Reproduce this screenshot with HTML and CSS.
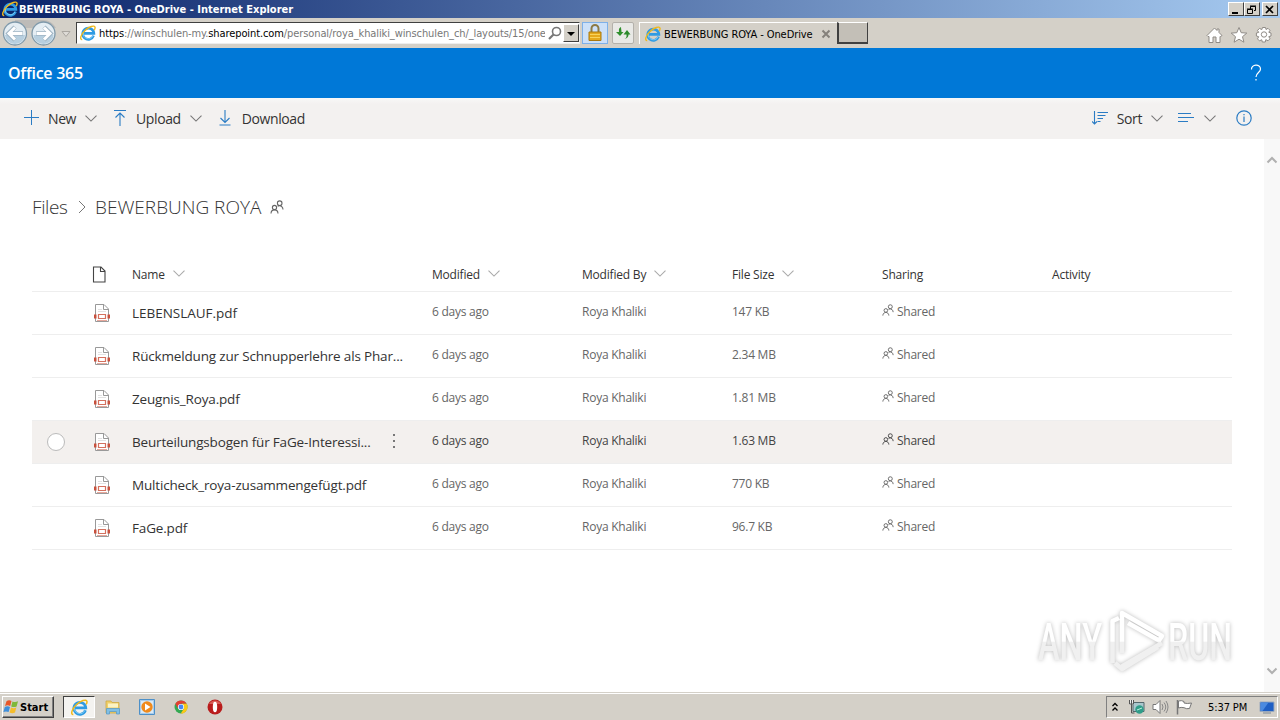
FILE: index.html
```html
<!DOCTYPE html>
<html lang="en">
<head>
    <meta charset="UTF-8">
    <title>BEWERBUNG ROYA - OneDrive</title>
    <link rel="stylesheet" href="styles.css">
</head>
<body>
    <!-- shared icons -->
    <svg class="defs" width="0" height="0">
        <symbol id="ie" viewBox="0 0 16 16">
            <path d="M13.6 10.6A5.6 5.6 0 1 1 13.9 8.4H4" fill="none" stroke="#2f9be3" stroke-width="2.6"/>
            <path d="M12.9 10.8A5 5 0 0 1 3.4 8" fill="none" stroke="#8ed4f7" stroke-width=".8"/>
            <path d="M2.2 14.6C-.6 14.8.6 9.600 5 5.400 9 1.600 14.400-.2 15 2.200c.2.9-.2 2-.8 2.900" fill="none" stroke="#f0b91c" stroke-width="1.4"/>
        </symbol>
        <symbol id="chev" viewBox="0 0 12 7">
            <path d="M.5.7 6 6.100 11.500.7" fill="none" stroke="currentColor" stroke-width="1.100"/>
        </symbol>
        <symbol id="people" viewBox="0 0 14 14">
            <g fill="none" stroke="currentColor" stroke-width="1.100">
                <circle cx="9.700" cy="3.200" r="2.300"/>
                <path d="M7.600 6.200Q9.700 4.800 11.800 6.600 13 7.800 13 9.500"/>
                <circle cx="4.500" cy="7.500" r="2.100"/>
                <path d="M1 13.500C1.200 8.600 7.800 8.600 8 13.500"/>
            </g>
        </symbol>
        <symbol id="pdf" viewBox="0 0 18 20">
            <path d="M2.500 18.500V1.500H11L15.500 6v12.500z" fill="#fff" stroke="#999"/>
            <path d="M10.500 1.500V6.500H15.500" fill="none" stroke="#999"/>
            <path d="M5 6.500h4M5 8.500h8" stroke="#e2e2e2"/>
            <path d="M1 11.500h2.500v4H1zM14.500 11.500h2.500v4h-2.500z" fill="#c8503c"/>
            <path d="M5.500 11.500h7v4h-7z" fill="#fff" stroke="#d4705e" stroke-width="1.200"/>
            <path d="M4 17.500h10" stroke="#e7a79b"/>
        </symbol>
    </svg>

    <div class="titlebar">
        <svg class="title-ie"><use href="#ie"/></svg>
        <span class="title-text">BEWERBUNG ROYA - OneDrive - Internet Explorer</span>
        <div class="win-buttons">
            <span class="win-btn"><svg width="12" height="10"><path d="M2 8h6" stroke="#000" stroke-width="2"/></svg></span>
            <span class="win-btn"><svg width="12" height="10"><path d="M4.500 4V1.500h5v4H8M4 1h6M1.500 4.500h5v4h-5zM1 4h6" fill="none" stroke="#000"/></svg></span>
            <span class="win-btn close"><svg width="12" height="10"><path d="M2 1l7 7M9 1 2 8" stroke="#000" stroke-width="1.700"/></svg></span>
        </div>
    </div>

    <div class="navbar">
        <svg class="nav-arrows" width="72" height="28" viewBox="0 0 72 28">
            <path d="M15 1h28c6 0 10 3 13 8H15z" fill="#bdbbb8"/>
            <g fill="#e4edf3" stroke="#7f99aa" stroke-width="1.300">
                <circle cx="15" cy="14.500" r="11.500"/>
                <circle cx="43.500" cy="14.500" r="11.500"/>
            </g>
            <path d="M5 16a10 9 0 0 0 20 0zM33.500 16a10 9 0 0 0 20 0z" fill="#b7cfdf"/>
            <g fill="none" stroke="#9fb4c3" stroke-width="4.400">
                <path d="M23 14.500H9M15 8l-6.500 6.500L15 21M36 14.500h14M44 8l6.500 6.500L44 21"/>
            </g>
            <g fill="none" stroke="#fff" stroke-width="3">
                <path d="M22.500 14.500H9M15 8.500l-6 6 6 6M36.500 14.500h14M44 8.500l6 6-6 6"/>
            </g>
            <path d="M62 12.500h8l-4 5z" fill="#dedbd6" stroke="#aaa6a0"/>
        </svg>
        <div class="address">
            <svg class="icon16"><use href="#ie"/></svg>
            <span class="url"><b>https</b>://winschulen-my.<b>sharepoint.com</b>/personal/roya_khaliki_winschulen_ch/_layouts/15/one</span>
            <svg width="14" height="14" class="search"><circle cx="8.500" cy="5.500" r="4" fill="none" stroke="#777" stroke-width="1.600"/><path d="M5.500 8.500 1 13" stroke="#777" stroke-width="2.200"/></svg>
            <span class="drop"><svg width="8" height="4"><path d="M0 0h8L4 4z"/></svg></span>
        </div>
        <span class="lock"><svg width="14" height="18"><path d="M3.500 8V4.500a3.500 3.500 0 0 1 7 0V8" fill="none" stroke="#8c7a45" stroke-width="2"/><path d="M1 8h12v8.500H1z" fill="#e5a91c" stroke="#a9780f"/><path d="M2 10.500h10M2 13.500h10" stroke="#f8d35c"/></svg></span>
        <span class="refresh"><svg width="16" height="14"><path d="M6 1C3.500 2 4 4 4 6H1L5 10l3.500-4H6.500C6.500 4 6 3 6 1z" fill="#2f8f2d"/><path d="M9.500 13c2.500-1 2-3 2-4.500H8.500L12 4l3.500 4.500H13.500c0 2-1 4-4 4.500z" fill="#2b8a2b"/></svg></span>
        <div class="tab">
            <svg class="icon16"><use href="#ie"/></svg>
            <span class="tab-text">BEWERBUNG ROYA - OneDrive</span>
            <svg width="10" height="10"><path d="M1.500 1.500l7 7m0-7-7 7" stroke="#85817b" stroke-width="2"/></svg>
        </div>
        <span class="new-tab"></span>
        <svg class="nav-tools" width="68" height="18" viewBox="0 0 68 18">
            <g fill="#fff" stroke="#8f8b86">
                <path d="M1 9.500 8.500 2l2.500 2.500V3h2v3.500l3 3-1.500 1H14V16.500h-4V11H7v5.500H3V10.500H2z"/>
                <path d="M33 1.500l2.200 5.200 5.600.4-4.300 3.600 1.400 5.500-4.900-3-4.900 3 1.400-5.500-4.300-3.600 5.600-.4z"/>
                <path d="M56.500 1.500h3l.5 2 2-1.200 2 2-1.200 2 2.200.7v3l-2.200.6 1.200 2.200-2 2-2.200-1.200-.5 2.400h-3l-.6-2.300-2.200 1.200-2-2 1.200-2.200-2.300-.7V7l2.300-.6-1.200-2 2-2 2.300 1.200z"/>
                <circle cx="58" cy="8.500" r="2.700"/>
            </g>
        </svg>
    </div>

    <div class="suite">
        <span class="brand">Office 365</span>
        <svg width="12" height="18"><path d="M1.500 5.500C1 .2 10.500-.6 10.500 5c0 3.500-4.500 3.500-4.500 8M6 15v1.500" fill="none" stroke="#fff" stroke-width="1.200"/></svg>
    </div>

    <div class="commands">
        <div class="cmd new">
            <svg width="16" height="16"><path d="M7.500 0v15M0 7.500h15" stroke="#2b7cc4"/></svg>
            <span>New</span>
            <svg class="chev"><use href="#chev"/></svg>
        </div>
        <div class="cmd upload">
            <svg width="12" height="16"><path d="M0 .5h12M6 16V3M1.500 7.500 6 3l4.500 4.500" fill="none" stroke="#2b7cc4" stroke-width="1.100"/></svg>
            <span>Upload</span>
            <svg class="chev"><use href="#chev"/></svg>
        </div>
        <div class="cmd download">
            <svg width="12" height="16"><path d="M.5 15h11M6 0v12M1.500 8 6 12.500 10.500 8" fill="none" stroke="#2b7cc4" stroke-width="1.100"/></svg>
            <span>Download</span>
        </div>
        <div class="cmd sort">
            <svg width="17" height="14"><path d="M2.500 0v13M0 10.500 2.500 13 5 10.500M5.500 1.500H16M5.500 4.500h8M5.500 7.500h5.500M5.500 10.500h3" fill="none" stroke="#2b7cc4" stroke-width="1.100"/></svg>
            <span>Sort</span>
            <svg class="chev"><use href="#chev"/></svg>
        </div>
        <div class="cmd view">
            <svg width="17" height="10"><path d="M0 .5h13M0 4.500h16M0 8.500h10" stroke="#2b7cc4"/></svg>
            <svg class="chev"><use href="#chev"/></svg>
        </div>
        <div class="cmd info">
            <svg width="16" height="16"><circle cx="8" cy="8" r="7.200" fill="none" stroke="#2b7cc4" stroke-width="1.200"/><path d="M8 6.500V12M8 4v1.300" stroke="#2b7cc4" stroke-width="1.200"/></svg>
        </div>
    </div>

    <div class="page">
        <div class="content">
            <div class="crumbs">
                <span class="crumb-files">Files</span>
                <svg width="8" height="14"><path d="M1 1l6 6-6 6" fill="none" stroke="#777"/></svg>
                <span class="crumb-current">BEWERBUNG ROYA</span>
                <svg class="crumb-people"><use href="#people"/></svg>
            </div>

            <div class="list">
                <div class="row head">
                    <span></span>
                    <span><svg width="14" height="17"><path d="M1.500 1h7.500l4 4v11H1.500zM8.500 1v4.500H13" fill="none" stroke="#444" stroke-width="1.100"/></svg></span>
                    <span>Name <svg class="chev"><use href="#chev"/></svg></span>
                    <span>Modified <svg class="chev"><use href="#chev"/></svg></span>
                    <span>Modified By <svg class="chev"><use href="#chev"/></svg></span>
                    <span>File Size <svg class="chev"><use href="#chev"/></svg></span>
                    <span>Sharing</span>
                    <span>Activity</span>
                </div>
                <div class="row">
                    <span></span>
                    <svg class="pdf"><use href="#pdf"/></svg>
                    <span class="name caps">LEBENSLAUF.pdf</span>
                    <span>6 days ago</span>
                    <span>Roya Khaliki</span>
                    <span>147 KB</span>
                    <span class="shared"><svg><use href="#people"/></svg>Shared</span>
                </div>
                <div class="row">
                    <span></span>
                    <svg class="pdf"><use href="#pdf"/></svg>
                    <span class="name">Rückmeldung zur Schnupperlehre als Phar...</span>
                    <span>6 days ago</span>
                    <span>Roya Khaliki</span>
                    <span>2.34 MB</span>
                    <span class="shared"><svg><use href="#people"/></svg>Shared</span>
                </div>
                <div class="row">
                    <span></span>
                    <svg class="pdf"><use href="#pdf"/></svg>
                    <span class="name">Zeugnis_Roya.pdf</span>
                    <span>6 days ago</span>
                    <span>Roya Khaliki</span>
                    <span>1.81 MB</span>
                    <span class="shared"><svg><use href="#people"/></svg>Shared</span>
                </div>
                <div class="row hover">
                    <span class="check"></span>
                    <svg class="pdf"><use href="#pdf"/></svg>
                    <span class="name">Beurteilungsbogen für FaGe-Interessi...<svg class="dots" width="4" height="16"><path d="M1 1h2v2H1zM1 7h2v2H1zM1 13h2v2H1z" fill="#777"/></svg></span>
                    <span>6 days ago</span>
                    <span>Roya Khaliki</span>
                    <span>1.63 MB</span>
                    <span class="shared"><svg><use href="#people"/></svg>Shared</span>
                </div>
                <div class="row">
                    <span></span>
                    <svg class="pdf"><use href="#pdf"/></svg>
                    <span class="name">Multicheck_roya-zusammengefügt.pdf</span>
                    <span>6 days ago</span>
                    <span>Roya Khaliki</span>
                    <span>770 KB</span>
                    <span class="shared"><svg><use href="#people"/></svg>Shared</span>
                </div>
                <div class="row">
                    <span></span>
                    <svg class="pdf"><use href="#pdf"/></svg>
                    <span class="name">FaGe.pdf</span>
                    <span>6 days ago</span>
                    <span>Roya Khaliki</span>
                    <span>96.7 KB</span>
                    <span class="shared"><svg><use href="#people"/></svg>Shared</span>
                </div>
            </div>
        </div>
        <div class="scrollbar">
            <svg width="12" height="8"><path d="M1.500 6.500 6 2l4.500 4.500" fill="none" stroke="#b0b0b0" stroke-width="2"/></svg>
            <svg width="12" height="8"><path d="M1.500 1.500 6 6l4.500-4.500" fill="none" stroke="#b0b0b0" stroke-width="2"/></svg>
        </div>

        <svg class="watermark" width="216" height="80" viewBox="0 0 216 80">
            <linearGradient id="fade" gradientUnits="userSpaceOnUse" x1="0" y1="0" x2="0" y2="76">
                <stop offset=".5" stop-color="#fff"/>
                <stop offset=".52" stop-color="#f0f0f0"/>
            </linearGradient>
            <text x="8" y="57" textLength="64" lengthAdjust="spacingAndGlyphs" fill="url(#fade)">ANY</text>
            <text x="138" y="57" textLength="64" lengthAdjust="spacingAndGlyphs" fill="url(#fade)">RUN</text>
            <path d="M89 15 82.500 18V60M92 50V10L132 33l-3 4.500L98 20M132 40 91 64M85 60l7 6 36-22" fill="none" stroke="url(#fade)" stroke-width="4.500" stroke-linejoin="round"/>
        </svg>
    </div>

    <div class="taskbar">
        <div class="start">
            <svg width="17" height="16" viewBox="0 0 17 16">
                <path d="M3.500 2.200Q6 .6 8.500 2L7.200 7Q4.700 5.600 2 7z" fill="#e8572a"/>
                <path d="M9.500 2.400Q12 3.800 15 2.300L13.600 7.400Q10.800 8.800 8.200 7.400z" fill="#7fb83a"/>
                <path d="M1.800 8Q4.500 6.700 7 8L5.600 13Q3 11.800.4 13z" fill="#3f8fdb"/>
                <path d="M8 8.400Q10.600 9.800 13.300 8.500L12 13.500Q9.200 14.800 6.600 13.400z" fill="#f5bd2c"/>
            </svg>
            <span>Start</span>
        </div>
        <div class="task active"><svg class="task-ie"><use href="#ie"/></svg></div>
        <div class="task">
            <svg width="16" height="16"><path d="M1 2h5l1 1.500h7V14H1z" fill="#efcf6a" stroke="#cfa943" stroke-width=".8"/><path d="M3 4.500h10v4H3z" fill="#fbf3c4"/><path d="M1.500 15V9.500h13V15h-3v-2.500h-7V15z" fill="#7fbfe6" stroke="#5b9cc8" stroke-width=".8"/></svg>
        </div>
        <div class="task">
            <svg width="16" height="16"><path d="M.5.5h15v15H.5z" fill="#a9cdec" stroke="#4d90c8"/><path d="M2 2h12v12H2z" fill="#d9eaf7"/><circle cx="8" cy="8" r="5.700" fill="#f08a1c"/><path d="M6 4.500v7L11.500 8z" fill="#fff"/></svg>
        </div>
        <div class="task">
            <svg width="14" height="14" viewBox="0 0 14 14"><circle cx="7" cy="7" r="6.500" fill="#33a852"/><path d="M1.300 3.800A6.500 6.500 0 0 1 12.700 3.800H7L4.200 8.700z" fill="#e23f32"/><path d="M12.700 3.800A6.500 6.500 0 0 1 6.700 13.500L10 8.500 8 3.800z" fill="#fbc816"/><circle cx="7" cy="7" r="3.100" fill="#fff"/><circle cx="7" cy="7" r="2.400" fill="#4587f3"/></svg>
        </div>
        <div class="task">
            <svg width="16" height="16"><circle cx="8" cy="8" r="7.500" fill="#b91c1c"/><path d="M2 5a7 7 0 0 1 12 0z" fill="#d85a55"/><ellipse cx="8" cy="8" rx="2.200" ry="5.300" fill="#fff"/></svg>
        </div>
        <div class="tray">
            <svg width="8" height="10"><path d="M1.500 4 4 1.500 6.500 4M1.500 8.500 4 6l2.500 2.500" fill="none" stroke="#000" stroke-width="1.300"/></svg>
            <svg class="net" width="17" height="16"><path d="M5 3.500h11v9H5z" fill="#a9c7cd" stroke="#54676c"/><path d="M1 1h4.500v4.500H1z" fill="#eee"/><path d="M1.500 1v4h4V1M3.500 1v13h3" fill="none" stroke="#555"/><circle cx="11.500" cy="10.500" r="4.200" fill="#2f9d89"/><path d="M9 11l5-2" stroke="#bff0df"/></svg>
            <svg class="vol" width="17" height="16"><path d="M1 5.500h3L8 1.500v13l-4-4H1z" fill="#fff" stroke="#777"/><path d="M10 5q2 3 0 6M12 3.500q3.500 4.500 0 9M14 2q4 6 0 12" fill="none" stroke="#888"/></svg>
            <svg class="flag" width="17" height="16"><path d="M1.500 1v14.500" stroke="#777" stroke-width="1.500"/><path d="M2.500 2q3-1 5.500.5v1.500q3 1 7.500 0l-2 5.500q-3 .8-5.500-.8-3-.8-5.500.3z" fill="#fff" stroke="#777"/></svg>
            <span class="clock">5:37 PM</span>
            <svg class="desk" width="16" height="13"><path d="M1 1h14v9.500H1z" fill="#1f5fc4" stroke="#9aa9bd"/><path d="M1.500 1.500h8l-6 8.500h-2z" fill="#4b8ae0"/><path d="M4 12h8" stroke="#7a8796"/></svg>
        </div>
    </div>
</body>
</html>
```
FILE: styles.css
```css
* {
    box-sizing: border-box;
}

body {
    margin: 0;
    width: 1280px;
    height: 720px;
    overflow: hidden;
    display: flex;
    flex-direction: column;
    background: #fff;
    color: #333;
    font-family: "Open Sans", "Noto Sans", sans-serif;
    font-size: 13px;
}

svg {
    display: block;
    flex: none;
}

span {
    white-space: nowrap;
}

.defs {
    position: absolute;
}

.icon16 {
    width: 16px;
    height: 16px;
}

.chev {
    width: 12px;
    height: 7px;
    color: #777;
}

/* window title */
.titlebar {
    flex: none;
    height: 18px;
    display: flex;
    align-items: center;
    padding: 0 2px;
    background: linear-gradient(90deg, #0a246a, #a6caf0);
    color: #fff;
    font: bold 11px "DejaVu Sans Condensed", "DejaVu Sans", sans-serif;
}

.title-ie {
    width: 16px;
    height: 16px;
    margin-right: 1px;
}

.win-buttons {
    display: flex;
    margin-left: auto;
}

.win-btn {
    width: 16px;
    height: 14px;
    padding: 2px 1px;
    background: #d4d0c8;
    border: 1px solid;
    border-color: #fff #404040 #404040 #fff;
}

.close {
    margin-left: 2px;
}

/* address bar row */
.navbar {
    flex: none;
    height: 30px;
    display: flex;
    align-items: center;
    background: #d4d0c8;
    color: #000;
    font: 11px "DejaVu Sans Condensed", "DejaVu Sans", sans-serif;
}

.nav-arrows {
    margin-right: 4px;
}

.address {
    width: 504px;
    height: 22px;
    display: flex;
    align-items: center;
    padding: 0 0 0 3px;
    background: #fff;
    border: 1px solid #404040;
    border-right-color: #eee;
    border-bottom-color: #eee;
}

.url {
    width: 446px;
    margin-left: 3px;
    overflow: hidden;
    color: #777;
    letter-spacing: -.1px;
}

.url b {
    font-weight: normal;
    color: #000;
}

.search {
    margin-left: 3px;
}

.drop {
    width: 16px;
    height: 18px;
    margin-left: auto;
    padding: 7px 3px;
    background: #d4d0c8;
    border: 1px solid;
    border-color: #fff #404040 #404040 #fff;
}

.lock {
    width: 26px;
    height: 22px;
    margin-left: 2px;
    padding: 1px 5px;
    background: #cce0f8;
    border: 1px solid #7eb0e8;
}

.refresh {
    width: 22px;
    height: 22px;
    margin-left: 4px;
    padding: 3px 2px;
    background: #e9e9e6;
    border: 1px solid #b4b1ab;
    border-radius: 2px;
}

.tab {
    width: 198px;
    height: 22px;
    margin-left: 5px;
    display: flex;
    align-items: center;
    padding-left: 5px;
    border-left: 1px solid #fff;
    border-top: 1px solid #fff;
}

.tab-text {
    width: 150px;
    margin: 2px 7px 0 3px;
    letter-spacing: -.08px;
}

.new-tab {
    width: 31px;
    height: 22px;
    background: #c3bfb7;
    border: 2px solid #404040;
    border-width: 1px 1px 2px 2px;
    border-top-color: #fff;
}

.nav-tools {
    margin: 3px 6px 0 auto;
}

/* blue header */
.suite {
    flex: none;
    height: 50px;
    display: flex;
    align-items: center;
    justify-content: space-between;
    padding: 0 18px 0 8px;
    background: #0078d7;
    color: #fff;
}

.brand {
    font-size: 16px;
    font-weight: 600;
    letter-spacing: -.25px;
}

/* command bar */
.commands {
    flex: none;
    height: 41px;
    display: flex;
    align-items: center;
    padding-left: 24px;
    background: linear-gradient(#f8f8f8, #f3f1f0 6px);
    font-size: 14px;
}

.cmd {
    display: flex;
    align-items: center;
    letter-spacing: -.4px;
}

.cmd > svg {
    margin-top: -1px;
}

.cmd > .chev {
    margin-left: 9px;
}

.cmd span {
    margin-left: 8px;
}

.upload {
    margin-left: 17px;
}

.upload span {
    margin-left: 10px;
}

.download {
    margin-left: 17px;
}

.download span {
    margin-left: 11px;
}

.sort {
    margin-left: auto;
}

.view {
    margin-left: 15px;
}

.info {
    margin: 0 28px 0 20px;
}

/* file list */
.page {
    position: relative;
    flex: 1;
    display: flex;
}

.content {
    flex: 1;
    padding: 54px 32px 0;
}

.crumbs {
    height: 28px;
    display: flex;
    align-items: center;
    font-size: 19px;
    font-weight: 300;
}

.crumb-files {
    width: 46px;
    letter-spacing: -.4px;
}

.crumb-current {
    width: 167px;
    margin-left: 9px;
}

.crumb-people {
    width: 14px;
    height: 14px;
    margin-left: 8px;
    color: #666;
}

.list {
    margin-top: 36px;
}

.row {
    height: 43px;
    display: grid;
    grid-template-columns: 60px 40px 300px 150px 150px 150px 170px 1fr;
    align-items: center;
    border-bottom: 1px solid #eee;
    font-size: 12px;
    line-height: 16px;
    color: #666;
    letter-spacing: -.25px;
}

.row > span {
    margin-top: -2px;
}

.head {
    height: 35px;
    color: #333;
    letter-spacing: -.2px;
}

.head > span {
    display: flex;
    align-items: center;
    margin-top: 1px;
}

.head .chev {
    margin: -2px 0 0 8px;
    color: #aaa;
}

.row > .name {
    position: relative;
    margin-top: 0;
    font-size: 13.5px;
    color: #333;
    letter-spacing: -.17px;
}

.row > .caps {
    letter-spacing: -.02px;
}

.row > .pdf {
    width: 18px;
    height: 20px;
    margin: -1px 0 0 1px;
}

.hover {
    background: #f3f0ee;
    color: #444;
}

.row > .check {
    width: 18px;
    height: 18px;
    margin: 0 0 0 15px;
    background: #fff;
    border: 1px solid #bbb;
    border-radius: 50%;
}

.dots {
    position: absolute;
    left: 260px;
    top: -1px;
}

.shared {
    display: flex;
    align-items: center;
}

.shared svg {
    width: 12px;
    height: 12px;
    margin: -4px 3px 0 0;
}

.scrollbar {
    width: 16px;
    display: flex;
    flex-direction: column;
    align-items: center;
    justify-content: space-between;
    padding: 17px 0;
    background: #f8f8f8;
}

.watermark {
    position: absolute;
    left: 1030px;
    top: 464px;
    font: 500 52px Roboto, sans-serif;
    filter: drop-shadow(0 0 2px #bbb);
}

/* taskbar */
.taskbar {
    flex: none;
    height: 28px;
    display: flex;
    align-items: center;
    padding: 1px 2px 0;
    background: #d4d0c8;
    border-top: 1px solid #d4d0c8;
    box-shadow: inset 0 1px #fff;
    color: #000;
    font: 11px "DejaVu Sans Condensed", "DejaVu Sans", sans-serif;
}

.start {
    width: 52px;
    height: 22px;
    display: flex;
    align-items: center;
    border: 1px solid;
    border-color: #fff #404040 #404040 #fff;
    box-shadow: inset -1px -1px #808080;
    font-weight: bold;
}

.task {
    width: 34px;
    height: 22px;
    display: flex;
    align-items: center;
    justify-content: center;
}

.active {
    width: 32px;
    margin: 0 1px 0 9px;
    background: #f4f3f0;
    border: 1px solid;
    border-color: #404040 #fff #fff #404040;
}

.task-ie {
    width: 17px;
    height: 17px;
}

.tray {
    width: 172px;
    height: 22px;
    margin-left: auto;
    display: flex;
    align-items: center;
    padding-left: 4px;
    border: 1px solid;
    border-color: #808080 #fff #fff #808080;
}

.net {
    margin-left: 9px;
}

.vol {
    margin-left: 7px;
}

.flag {
    margin-left: 7px;
}

.clock {
    width: 41px;
    margin-left: 15px;
    letter-spacing: -.1px;
}

.desk {
    margin-left: 10px;
}
```
